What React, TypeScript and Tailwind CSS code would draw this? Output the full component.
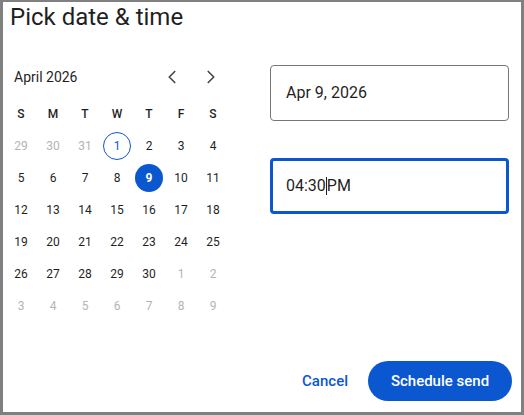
import { ChevronLeft, ChevronRight } from "lucide-react";

const weekdays = ["S", "M", "T", "W", "T", "F", "S"];

type Day = { n: number; muted?: boolean };

const weeks: Day[][] = [
  [{ n: 29, muted: true }, { n: 30, muted: true }, { n: 31, muted: true }, { n: 1 }, { n: 2 }, { n: 3 }, { n: 4 }],
  [{ n: 5 }, { n: 6 }, { n: 7 }, { n: 8 }, { n: 9 }, { n: 10 }, { n: 11 }],
  [{ n: 12 }, { n: 13 }, { n: 14 }, { n: 15 }, { n: 16 }, { n: 17 }, { n: 18 }],
  [{ n: 19 }, { n: 20 }, { n: 21 }, { n: 22 }, { n: 23 }, { n: 24 }, { n: 25 }],
  [{ n: 26 }, { n: 27 }, { n: 28 }, { n: 29 }, { n: 30 }, { n: 1, muted: true }, { n: 2, muted: true }],
  [3, 4, 5, 6, 7, 8, 9].map((n) => ({ n, muted: true })),
];

function DayCell({ day, week }: { day: Day; week: number }) {
  const today = week === 0 && day.n === 1 && !day.muted;
  const selected = week === 1 && day.n === 9;

  let cls = "text-[#1f1f1f]";
  if (day.muted) cls = "text-[#b4b4b4]";
  if (today) cls = "text-[#0b57d0] border border-[#0b57d0]";
  if (selected) cls = "bg-[#0b57d0] text-white font-bold";

  return (
    <div className="w-8 h-8 flex items-center justify-center">
      <div className={`w-[28px] h-[28px] rounded-full flex items-center justify-center text-[12px] ${cls}`}>
        {day.n}
      </div>
    </div>
  );
}

export default function App() {
  return (
    <div
      className="w-[524px] h-[415px] bg-[#808080] pt-[2px] pl-[3px] pr-[3px] pb-[3px]"
      style={{ fontFamily: "Roboto, 'Liberation Sans', sans-serif" }}
    >
      <div className="h-full w-full bg-white flex flex-col">
        {/* title */}
        <div className="h-[30px] pl-[7px] text-[24px] leading-[30px] text-[#1f1f1f]">
          Pick date &amp; time
        </div>

        {/* body */}
        <div className="flex pt-[29px] pl-[2px]">
          {/* calendar */}
          <div className="w-[224px] shrink-0">
            <div className="h-8 flex items-center pl-[9px] pr-[2px]">
              <div className="flex-1 text-[14px] text-[#1f1f1f]">April 2026</div>
              <div className="flex items-center gap-[7px]">
                <button className="w-8 h-8 flex items-center justify-center text-[#444746]">
                  <ChevronLeft size={22} strokeWidth={1.8} />
                </button>
                <button className="w-8 h-8 flex items-center justify-center text-[#444746]">
                  <ChevronRight size={22} strokeWidth={1.8} />
                </button>
              </div>
            </div>

            <div className="mt-[5px] grid grid-cols-7">
              {weekdays.map((d, i) => (
                <div key={i} className="w-8 h-8 flex items-center justify-center text-[12px] font-medium text-[#1f1f1f]">
                  {d}
                </div>
              ))}
            </div>

            {weeks.map((w, wi) => (
              <div key={wi} className="grid grid-cols-7">
                {w.map((day, di) => (
                  <DayCell key={di} day={day} week={wi} />
                ))}
              </div>
            ))}
          </div>

          {/* inputs */}
          <div className="ml-[41px] w-[239px] pt-[4px] flex flex-col gap-[37px]">
            <div className="h-[56px] rounded-[4px] border border-[#747775] flex items-center pl-[15px] text-[16px] text-[#1f1f1f]">
              Apr 9, 2026
            </div>
            <div className="h-[56px] rounded-[4px] border-[3px] border-[#0b57d0] flex items-center pl-[13px] text-[16px] text-[#1f1f1f]">
              <span>04:30</span>
              <span className="w-px h-[18px] bg-[#1f1f1f]" />
              <span>PM</span>
            </div>
          </div>
        </div>

        <div className="flex-1" />

        {/* footer */}
        <div className="flex justify-end items-center gap-2 pr-[9px] pb-[11px]">
          <button className="h-10 px-3 text-[15px] font-medium text-[#0b57d0]">Cancel</button>
          <button className="h-10 w-[144px] rounded-full bg-[#0b57d0] text-white text-[15px] font-medium">
            Schedule send
          </button>
        </div>
      </div>
    </div>
  );
}
